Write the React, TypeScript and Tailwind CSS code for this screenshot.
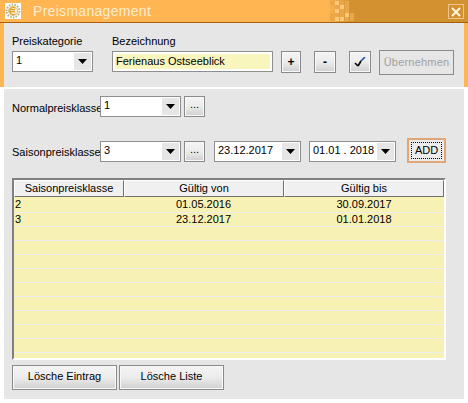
const font = "font-['Liberation_Sans',Arial,sans-serif]"

const rows = [
  { klasse: "2", von: "01.05.2016", bis: "30.09.2017" },
  { klasse: "3", von: "23.12.2017", bis: "01.01.2018" },
  ...Array.from({ length: 10 }, () => ({ klasse: "", von: "", bis: "" })),
]

function Arrow() {
  return (
    <svg width="9" height="5" viewBox="0 0 9 5">
      <path d="M0 0h9L4.5 5z" fill="#000" />
    </svg>
  )
}

function Combo({ value, className }: { value: string; className: string }) {
  return (
    <div className={`flex h-[21px] shrink-0 items-stretch border border-[#8f8f8f] bg-white p-px ${className}`}>
      <span className="flex-1 truncate pl-[2px] text-[11px] leading-[15px] text-black">{value}</span>
      <span className="flex w-[17px] items-center justify-center bg-[#e6e6e6]">
        <Arrow />
      </span>
    </div>
  )
}

function SmallButton({ children, className }: { children: React.ReactNode; className: string }) {
  return (
    <button className={`flex shrink-0 items-center justify-center border border-[#8a8a8a] bg-gradient-to-b from-[#f4f4f4] via-[#ececec] to-[#cfcfcf] text-[11px] text-black shadow-[inset_0_0_0_1px_#f8f8f8] ${className}`}>
      {children}
    </button>
  )
}

function HeaderCell({ children, className }: { children: React.ReactNode; className: string }) {
  return (
    <div className={`flex h-[17px] items-center justify-center border-t border-l border-t-white border-l-white border-r border-b border-r-[#707070] border-b-[#707070] bg-[#f0f0f0] text-[11px] text-black ${className}`}>
      {children}
    </div>
  )
}

function SunIcon() {
  return (
    <svg width="16" height="16" viewBox="0 0 16 16">
      <rect width="16" height="16" fill="#fff" />
      <circle cx="8" cy="8" r="6.4" fill="none" stroke="#b9b08a" strokeWidth="2" strokeDasharray="1.6 1.2" />
      <circle cx="8" cy="8" r="4.6" fill="#f7f1d8" stroke="#d8c98a" />
      <path d="M5 6.6h5M5 8.6h5" stroke="#e2a12c" strokeWidth="1.3" />
      <path d="M10.4 5.4A3.4 3.4 0 1 0 10.4 10.6" fill="none" stroke="#e2a12c" strokeWidth="1.2" />
    </svg>
  )
}

function Checker() {
  const light = [[1, 0], [2, 1], [1, 2], [3, 3], [1, 4], [2, 4]]
  const mid = [[0, 0], [2, 0], [3, 0], [1, 1], [3, 1], [2, 2], [3, 2], [0, 3], [1, 3], [2, 3], [4, 3], [0, 4], [3, 4], [4, 4]]
  return (
    <svg width="28" height="22" viewBox="0 0 28 22" className="absolute left-[330px] top-0">
      {mid.map(([x, y]) => (
        <rect key={`m${x}${y}`} x={x * 5} y={y * 4 + 1} width="4" height="4" fill="#e9a64a" />
      ))}
      {light.map(([x, y]) => (
        <rect key={`l${x}${y}`} x={x * 5} y={y * 4 + 1} width="4" height="4" fill="#ffc977" />
      ))}
    </svg>
  )
}

export default function App() {
  return (
    <div className={`relative h-[403px] w-[468px] overflow-hidden bg-white text-[11px] text-black ${font}`}>
      <div className="flex h-[87px] flex-col bg-[#d8982f]">
        {/* Titelleiste */}
        <div className="relative flex h-[22px] shrink-0 items-center bg-gradient-to-r from-[#ffb552] from-70% to-[#d2922f] to-75%">
          <div className="ml-[5px] flex h-[16px] w-[16px] items-center justify-center">
            <SunIcon />
          </div>
          <span className="ml-[12px] text-[14px] tracking-[0.3px] text-[#ffeccf]">Preismanagement</span>
          <Checker />
          <div className="absolute left-[448px] top-[4px] flex h-[15px] w-[16px] items-center justify-center border border-[#eec68d]">
            <svg width="10" height="10" viewBox="0 0 10 10">
              <path d="M1 1l8 8M9 1l-8 8" stroke="#fff3df" strokeWidth="2" />
            </svg>
          </div>
        </div>
        <div className="flex flex-1 flex-col border-t border-t-[#a85f12] bg-[#ffb552] px-[4px]">
          <div className="flex flex-1 items-start bg-[#e6e6e6] pl-[8px] pt-[11px]">
            <div className="flex w-[100px] flex-col">
              <span className="h-[17px] leading-[14px]">Preiskategorie</span>
              <Combo value="1" className="w-[81px]" />
            </div>
            <div className="flex flex-col">
              <span className="h-[17px] leading-[14px]">Bezeichnung</span>
              <div className="h-[21px] w-[161px] border border-[#8f8f8f] bg-white p-[2px]">
                <div className="h-[15px] bg-[#f8f5bd] pl-[1px] text-[11px] leading-[15px]">Ferienaus Ostseeblick</div>
              </div>
            </div>
            <div className="ml-[8px] mt-[17px] flex items-start">
              <SmallButton className="h-[22px] w-[20px] text-[12px] font-bold">+</SmallButton>
              <SmallButton className="ml-[13px] h-[22px] w-[22px] text-[12px] font-bold">-</SmallButton>
              <SmallButton className="ml-[13px] h-[22px] w-[22px]">
                <svg width="12" height="10" viewBox="0 0 12 10">
                  <path d="M1 6l3 3" stroke="#000" strokeWidth="1.6" fill="none" />
                  <path d="M4 9l3-5" stroke="#000" strokeWidth="1.6" fill="none" />
                  <path d="M7 4l4-4" stroke="#1c4fb0" strokeWidth="1.6" fill="none" />
                </svg>
              </SmallButton>
              <button className="ml-[8px] -mt-[1px] h-[25px] w-[75px] border border-[#8a8a8a] bg-[#e6e6e6] text-[11px] tracking-[0.2px] text-[#a0a0a0]">
                Übernehmen
              </button>
            </div>
          </div>
        </div>
      </div>
      <div className="ml-[4px] mt-[2px] flex h-[310px] w-[460px] flex-col bg-[#e6e6e6] pl-[8px]">
        <div className="mt-[7px] flex h-[22px] items-start">
          <span className="w-[88px] pt-[5px] leading-[14px]">Normalpreisklasse</span>
          <Combo value="1" className="w-[81px]" />
          <SmallButton className="ml-[3px] h-[21px] w-[21px] pb-[4px]">...</SmallButton>
        </div>
        <div className="mt-[20px] flex h-[25px] items-start">
          <span className="w-[88px] pt-[7px] leading-[14px]">Saisonpreisklasse</span>
          <Combo value="3" className="mt-[3px] w-[81px]" />
          <SmallButton className="ml-[3px] mt-[3px] h-[21px] w-[21px] pb-[4px]">...</SmallButton>
          <Combo value="23.12.2017" className="ml-[9px] mt-[3px] w-[87px]" />
          <Combo value="01.01 . 2018" className="ml-[8px] mt-[3px] w-[87px]" />
          <button className="ml-[11px] h-[25px] w-[39px] border-2 border-[#e0a678] bg-[#ececec] p-[2px] text-[11px]">
            <span className="flex h-full w-full items-center justify-center border border-dotted border-black leading-none">ADD</span>
          </button>
        </div>
        {/* Tabelle */}
        <div className="mt-[15px] h-[182px] w-[434px] overflow-hidden border-2 border-t-[#808080] border-l-[#808080] border-r-white border-b-white bg-[#f8f1b4]">
          <div className="flex">
            <HeaderCell className="w-[110px]">Saisonpreisklasse</HeaderCell>
            <HeaderCell className="w-[160px]">Gültig von</HeaderCell>
            <HeaderCell className="w-[160px]">Gültig bis</HeaderCell>
          </div>
          {rows.map((row, i) => (
            <div key={i} className={`flex border-b border-b-[#ececec] text-[11px] ${i === 0 ? "h-[16px] leading-[15px]" : "h-[14px] leading-[12px]"}`}>
              <div className="w-[110px] border-r border-r-[#ececec] pl-[1px]">{row.klasse}</div>
              <div className="w-[160px] border-r border-r-[#ececec] text-center">{row.von}</div>
              <div className="w-[160px] text-center">{row.bis}</div>
            </div>
          ))}
        </div>
        <div className="mt-[5px] flex gap-[2px]">
          <SmallButton className="h-[25px] w-[105px] pb-[2px]">Lösche Eintrag</SmallButton>
          <SmallButton className="h-[25px] w-[105px] pb-[2px]">Lösche Liste</SmallButton>
        </div>
      </div>
    </div>
  )
}
